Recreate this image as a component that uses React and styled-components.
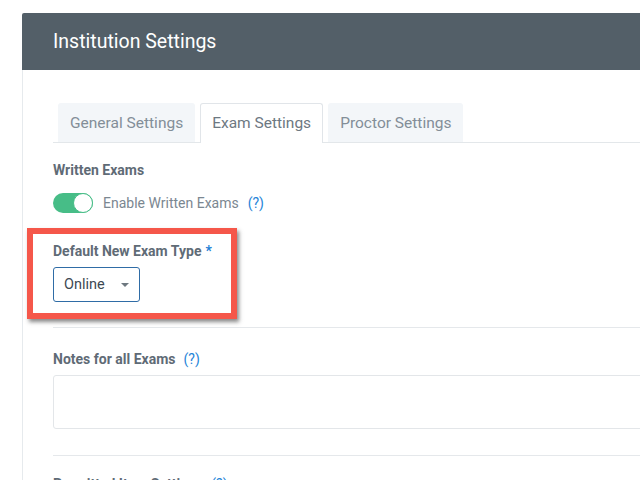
import React from "react";
import styled, { createGlobalStyle } from "styled-components";

const GlobalStyle = createGlobalStyle`
  html, body { margin: 0; padding: 0; background: #ffffff; }
  body { font-family: Roboto, "Liberation Sans", Arial, sans-serif; -webkit-font-smoothing: antialiased; }
  *, *::before, *::after { box-sizing: border-box; }
`;

const Page = styled.div`
  width: 640px;
  height: 480px;
  overflow: hidden;
  padding: 13px 0 0 22px;
`;

const Panel = styled.div`
  width: 720px;
`;

const Header = styled.div`
  height: 57px;
  background: #535f68;
  border-top-left-radius: 2px;
  display: flex;
  align-items: center;
  padding-left: 31px;
`;

const Title = styled.h1`
  margin: 0;
  font-size: 19.5px;
  font-weight: 400;
  color: #ffffff;
`;

const Body = styled.div`
  border-left: 1px solid #e6eaed;
  padding: 33px 0 40px 30px;
`;

const TabBar = styled.div`
  display: flex;
  gap: 5px;
  padding-left: 5px;
  height: 40px;
  border-bottom: 1px solid #e3e7ea;
`;

const Tab = styled.div`
  height: ${(p) => (p.$active ? "40px" : "39px")};
  padding: 0 ${(p) => (p.$active ? "11px" : "12px")};
  display: flex;
  align-items: center;
  font-size: 15.5px;
  color: ${(p) => (p.$active ? "#6d7882" : "#838e98")};
  background: ${(p) => (p.$active ? "#ffffff" : "#f3f6f9")};
  border: ${(p) => (p.$active ? "1px solid #e1e5e9" : "none")};
  border-bottom: none;
  border-radius: 3px 3px 0 0;
  ${(p) => (p.$active ? "margin-bottom: -1px; padding-bottom: 1px;" : "")}
`;

const Label = styled.div`
  font-size: 14px;
  line-height: 16px;
  font-weight: 700;
  color: #5f6b76;
  margin-top: ${(p) => p.$mt || 0}px;
  display: flex;
  align-items: center;
`;

const Help = styled.span`
  color: #2684d8;
  font-weight: 400;
  font-size: 14px;
  margin-left: ${(p) => p.$ml || 8}px;
`;

const Required = styled.span`
  color: #1f7fd6;
  margin-left: 4px;
`;

const ToggleRow = styled.div`
  display: flex;
  align-items: center;
  margin-top: 15px;
  height: 20px;
`;

const Track = styled.div`
  position: relative;
  width: 40px;
  height: 20px;
  border-radius: 10px;
  background: #47bd87;
`;

const Knob = styled.div`
  position: absolute;
  right: 0;
  top: 0;
  width: 20px;
  height: 20px;
  border-radius: 50%;
  background: #ffffff;
  border: 1.5px solid #47bd87;
`;

const ToggleText = styled.span`
  margin-left: 10px;
  font-size: 14px;
  color: #7b8791;
`;

const Highlight = styled.div`
  position: relative;
  margin-top: 30px;
  &::before {
    content: "";
    position: absolute;
    left: -26px;
    top: -15px;
    width: 210px;
    height: 91px;
    border: 6px solid #f5574a;
    box-shadow: 2px 3px 4px rgba(40, 40, 40, 0.55);
    pointer-events: none;
  }
`;

const Select = styled.div`
  margin-top: 8px;
  width: 87px;
  height: 35px;
  border: 1px solid #2f6ca6;
  border-radius: 3px;
  display: flex;
  align-items: center;
  justify-content: space-between;
  padding: 0 10px 0 10px;
  font-size: 14.5px;
  color: #3d4852;
`;

const Caret = styled.span`
  width: 0;
  height: 0;
  border-left: 4px solid transparent;
  border-right: 4px solid transparent;
  border-top: 4px solid #6e7880;
  margin-top: 1px;
`;

const Divider = styled.div`
  height: 1px;
  background: #e5e8eb;
  margin-top: ${(p) => p.$mt}px;
`;

const TextArea = styled.div`
  margin-top: 8px;
  height: 54px;
  border: 1px solid #e3e6e9;
  border-radius: 3px;
`;

export default function App() {
  return (
    <>
      <GlobalStyle />
      <Page>
        <Panel>
          <Header>
            <Title>Institution Settings</Title>
          </Header>
          <Body>
            <TabBar>
              <Tab>General Settings</Tab>
              <Tab $active>Exam Settings</Tab>
              <Tab>Proctor Settings</Tab>
            </TabBar>
            <Label $mt={19}>Written Exams</Label>
            <ToggleRow>
              <Track>
                <Knob />
              </Track>
              <ToggleText>Enable Written Exams</ToggleText>
              <Help $ml={9}>(?)</Help>
            </ToggleRow>
            <Highlight>
              <Label>
                Default New Exam Type<Required>*</Required>
              </Label>
              <Select>
                <span>Online</span>
                <Caret />
              </Select>
            </Highlight>
            <Divider $mt={25} />
            <Label $mt={23}>
              Notes for all Exams<Help>(?)</Help>
            </Label>
            <TextArea />
            <Divider $mt={26} />
            <Label $mt={20}>
              Permitted Item Settings<Help>(?)</Help>
            </Label>
          </Body>
        </Panel>
      </Page>
    </>
  );
}
